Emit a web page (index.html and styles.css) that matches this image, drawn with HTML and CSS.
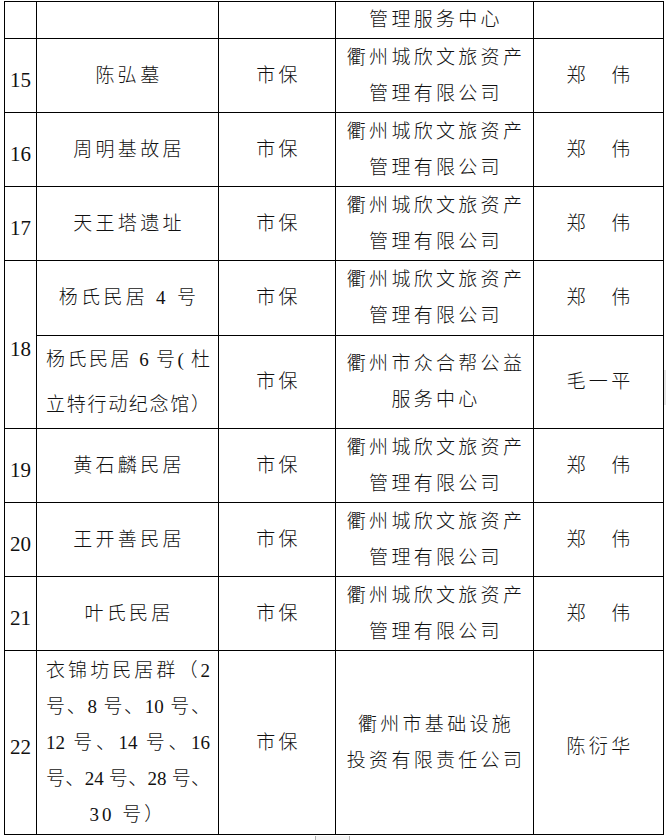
FILE: index.html
```html
<!DOCTYPE html>
<html lang="zh-CN">
<head>
<meta charset="utf-8">
<title>文保单位管理责任表</title>
<link rel="stylesheet" href="styles.css">
</head>
<body>
<div class="page">
<table class="grid">
  <colgroup>
    <col class="c-no">
    <col class="c-name">
    <col class="c-level">
    <col class="c-unit">
    <col class="c-person">
  </colgroup>
  <tbody>
    <tr class="r-top">
      <td class="no"></td>
      <td></td>
      <td></td>
      <td class="txt">管理服务中心</td>
      <td></td>
    </tr>
    <tr class="r-std">
      <td class="no">15</td>
      <td class="txt">陈弘墓</td>
      <td class="txt">市保</td>
      <td class="txt ml">衢州城欣文旅资产<br>管理有限公司</td>
      <td class="txt">郑　伟</td>
    </tr>
    <tr class="r-std">
      <td class="no">16</td>
      <td class="txt">周明基故居</td>
      <td class="txt">市保</td>
      <td class="txt ml">衢州城欣文旅资产<br>管理有限公司</td>
      <td class="txt">郑　伟</td>
    </tr>
    <tr class="r-std">
      <td class="no">17</td>
      <td class="txt">天王塔遗址</td>
      <td class="txt">市保</td>
      <td class="txt ml">衢州城欣文旅资产<br>管理有限公司</td>
      <td class="txt">郑　伟</td>
    </tr>
    <tr class="r-18a">
      <td class="no" rowspan="2">18</td>
      <td class="txt">杨氏民居 4 号</td>
      <td class="txt">市保</td>
      <td class="txt ml">衢州城欣文旅资产<br>管理有限公司</td>
      <td class="txt">郑　伟</td>
    </tr>
    <tr class="r-18b">
      <td class="jt wide">
        <span class="jl">杨氏民居 6 号( 杜</span>
        <span class="jl">立特行动纪念馆）</span>
      </td>
      <td class="txt">市保</td>
      <td class="txt ml">衢州市众合帮公益<br>服务中心</td>
      <td class="txt">毛一平</td>
    </tr>
    <tr class="r-std">
      <td class="no">19</td>
      <td class="txt">黄石麟民居</td>
      <td class="txt">市保</td>
      <td class="txt ml">衢州城欣文旅资产<br>管理有限公司</td>
      <td class="txt">郑　伟</td>
    </tr>
    <tr class="r-std">
      <td class="no">20</td>
      <td class="txt">王开善民居</td>
      <td class="txt">市保</td>
      <td class="txt ml">衢州城欣文旅资产<br>管理有限公司</td>
      <td class="txt">郑　伟</td>
    </tr>
    <tr class="r-std">
      <td class="no">21</td>
      <td class="txt">叶氏民居</td>
      <td class="txt">市保</td>
      <td class="txt ml">衢州城欣文旅资产<br>管理有限公司</td>
      <td class="txt">郑　伟</td>
    </tr>
    <tr class="r-22">
      <td class="no">22</td>
      <td class="jt">
        <span class="jl">衣锦坊民居群（2</span>
        <span class="jl">号、8 号、10 号、</span>
        <span class="jl">12 号、14 号、16</span>
        <span class="jl">号、24 号、28 号、</span>
        <span class="jc">30 号）</span>
      </td>
      <td class="txt">市保</td>
      <td class="txt ml">衢州市基础设施<br>投资有限责任公司</td>
      <td class="txt low">陈衍华</td>
    </tr>
  </tbody>
</table>
<div class="edge-bottom"></div>
<div class="edge-right"></div>
</div>
</body>
</html>
```
FILE: styles.css
```css
html, body {
  margin: 0;
  padding: 0;
  background: #ffffff;
}

.page {
  position: relative;
  width: 666px;
  height: 840px;
  overflow: hidden;
  padding-top: 1px;
  padding-left: 4px;
  box-sizing: border-box;
}

.grid {
  border-collapse: collapse;
  table-layout: fixed;
  width: 659px;
  font-family: "Liberation Serif", "Noto Sans CJK SC", serif;
  font-weight: 300;
  color: #111;
}

.c-no { width: 32px; }
.c-name { width: 182px; }
.c-level { width: 117px; }
.c-unit { width: 198px; }
.c-person { width: 130px; }

.grid td {
  border: 1px solid #000;
  padding: 0;
  text-align: center;
  vertical-align: middle;
  font-size: 19px;
  line-height: 36px;
}

.r-top { height: 37px; }
.r-std { height: 74px; }
.r-18a { height: 75px; }
.r-18b { height: 93px; }
.r-22 { height: 184px; }

.grid td.no {
  font-size: 21px;
  padding-top: 9px;
  font-weight: 400;
}

.grid td.txt {
  letter-spacing: 3.3px;
  padding-left: 3px;
}

.grid td.low {
  padding-top: 9px;
}

.grid td.jt {
  padding: 0 8px 0 9px;
}

.grid td.jt.wide {
  line-height: 45px;
}

.jl {
  display: block;
  white-space: nowrap;
  text-align: justify;
  text-align-last: justify;
}

.jc {
  display: block;
  white-space: nowrap;
  text-align: center;
  letter-spacing: 3px;
}

.edge-bottom {
  position: absolute;
  left: 315px;
  top: 836px;
  width: 33px;
  height: 6px;
  background: #f5f5f5;
  border-left: 1px solid #b0b0b0;
  border-right: 1px solid #b0b0b0;
}

.edge-right {
  position: absolute;
  left: 664px;
  top: 370px;
  width: 2px;
  height: 35px;
  background: #e6e6e6;
}
```
